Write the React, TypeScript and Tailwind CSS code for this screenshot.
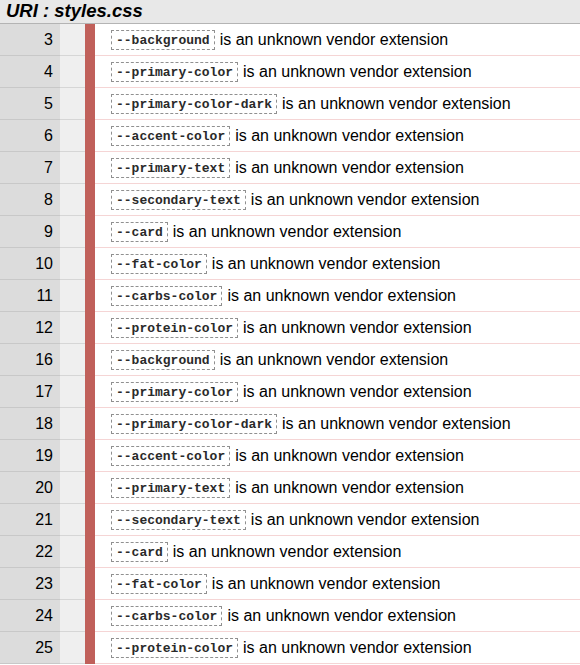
import React from "react";

const rows: [number, string][] = [
  [3, "--background"],
  [4, "--primary-color"],
  [5, "--primary-color-dark"],
  [6, "--accent-color"],
  [7, "--primary-text"],
  [8, "--secondary-text"],
  [9, "--card"],
  [10, "--fat-color"],
  [11, "--carbs-color"],
  [12, "--protein-color"],
  [16, "--background"],
  [17, "--primary-color"],
  [18, "--primary-color-dark"],
  [19, "--accent-color"],
  [20, "--primary-text"],
  [21, "--secondary-text"],
  [22, "--card"],
  [23, "--fat-color"],
  [24, "--carbs-color"],
  [25, "--protein-color"],
];

export default function App() {
  return (
    <div className="w-[580px] h-[665px] overflow-hidden bg-white font-['Liberation_Sans',Arial,sans-serif] text-black">
      <div className="h-[24px] bg-[#e8e8e8] border-b border-[#b4b4b4] pl-[6px] text-[18.5px] leading-[22px] font-bold italic">
        URI : styles.css
      </div>
      {rows.map(([n, name], i) => (
        <div key={i} className="flex h-[32px]">
          <div className="w-[60px] bg-[#dcdcdc] border-b border-[#c8c8c8] pr-[7px] text-right text-[16px] leading-[31px]">
            {n}
          </div>
          <div className="w-[25px] bg-[#efefef] border-b border-[#d6d6d6]" />
          <div className="w-[10px] bg-[#c0605a]" />
          <div className="flex-1 flex items-center border-b border-[#f5d5d5] pl-[16px] text-[16px]">
            <span className="border border-dashed border-[#909090] px-[4px] h-[20px] leading-[19px] font-['Liberation_Mono','Courier_New',monospace] text-[13px] font-bold text-[#2a2a2a]">
              {name}
            </span>
            <span className="ml-[5px]">is an unknown vendor extension</span>
          </div>
        </div>
      ))}
    </div>
  );
}
